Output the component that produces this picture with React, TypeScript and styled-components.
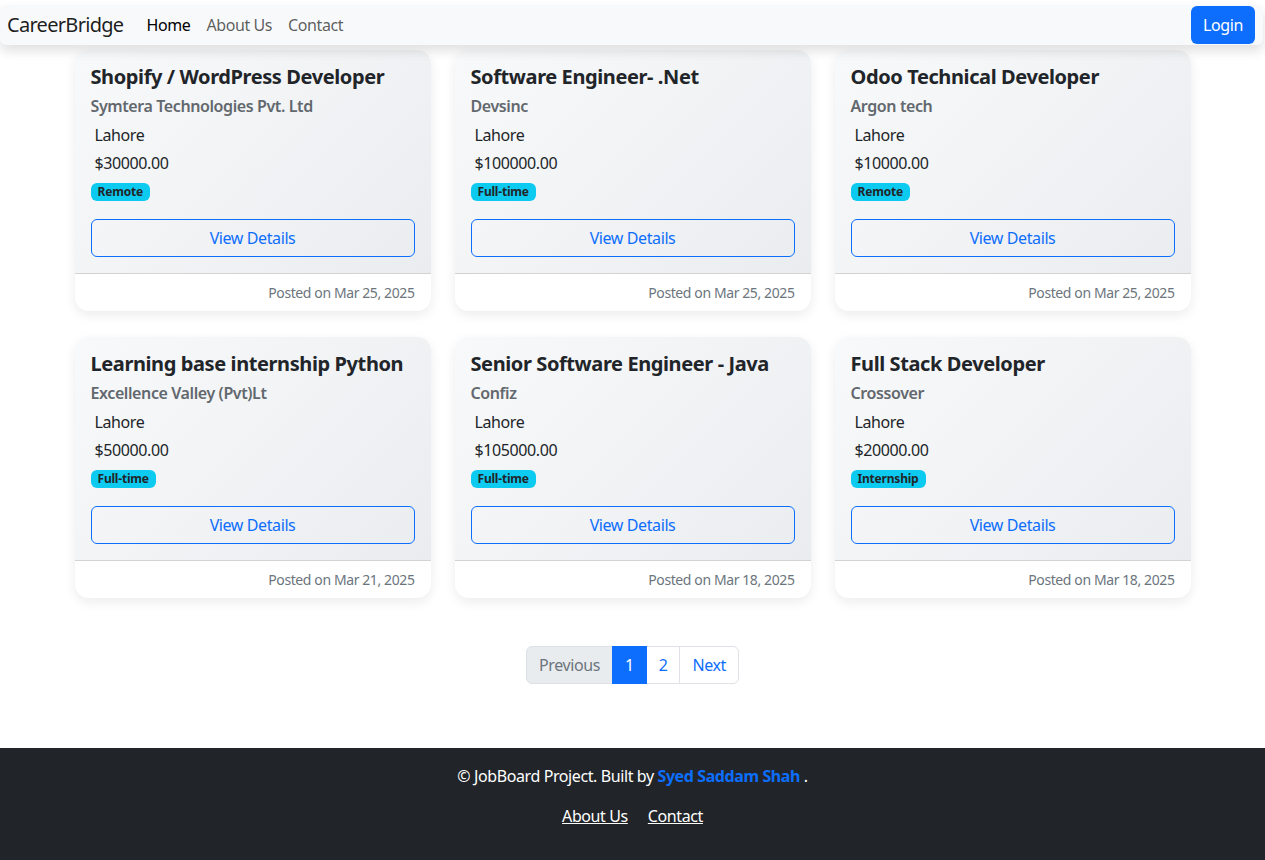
import React from "react";
import styled, { createGlobalStyle } from "styled-components";

const Global = createGlobalStyle`
  * { box-sizing: border-box; }
  body {
    margin: 0;
    font-family: "Noto Sans", "Open Sans", sans-serif;
    font-size: 16px;
    line-height: 1.5;
    letter-spacing: -0.4px;
    color: #212529;
    background: #fff;
  }
`;

const Page = styled.div`
  display: flex;
  flex-direction: column;
  min-height: 860px;
`;

const Navbar = styled.nav`
  position: sticky;
  top: 5px;
  z-index: 10;
  margin: 5px 2px 0 0;
  height: 40px;
  display: flex;
  align-items: center;
  padding: 0 8px 0 7px;
  background: #f8f9fa;
  border-radius: 6px;
  box-shadow: 0 6px 12px rgba(0, 0, 0, 0.12);
`;

const Brand = styled.a`
  font-size: 20px;
  letter-spacing: -0.7px;
  color: rgba(0, 0, 0, 0.9);
  text-decoration: none;
  margin-right: 23px;
`;

const NavLinks = styled.div`
  display: flex;
  gap: 16px;
  flex: 1;
`;

const NavLink = styled.a<{ $active?: boolean }>`
  font-size: 16px;
  color: ${(p) => (p.$active ? "#000" : "rgba(0,0,0,0.65)")};
  text-decoration: none;
`;

const LoginButton = styled.button`
  font-family: inherit;
  font-size: 16px;
  letter-spacing: inherit;
  color: #fff;
  background: #0d6efd;
  border: none;
  border-radius: 6px;
  height: 38px;
  padding: 0 12px;
`;

const Container = styled.main`
  width: 1140px;
  margin: 5px auto 0;
  padding: 0 12px;
`;

const Grid = styled.div`
  display: grid;
  grid-template-columns: repeat(3, 1fr);
  column-gap: 24px;
  row-gap: 26px;
`;

const Card = styled.div`
  display: flex;
  flex-direction: column;
  border-radius: 14px;
  overflow: hidden;
  background: linear-gradient(135deg, #f8f9fa, #e9ecef);
  box-shadow: 0 4px 12px rgba(0, 0, 0, 0.08);
`;

const CardBody = styled.div`
  flex: 1;
  padding: 16px;
  display: flex;
  flex-direction: column;
`;

const Title = styled.h5`
  margin: 0 0 7px;
  font-size: 20px;
  font-weight: 700;
  line-height: 1.2;
  color: #212529;
  position: relative;
  top: -1px;
`;

const Company = styled.h6`
  margin: 0 0 7px;
  font-size: 16px;
  font-weight: 600;
  line-height: 1.2;
  color: #62686e;
`;

const Info = styled.p`
  margin: 0 0 4px;
  padding-left: 4px;
  font-size: 16px;
  line-height: 24px;
`;

const Badge = styled.span`
  align-self: flex-start;
  margin-top: 4px;
  background: #0dcaf0;
  color: #212529;
  font-size: 12px;
  font-weight: 700;
  letter-spacing: -0.2px;
  line-height: 1;
  padding: 3px 7px;
  border-radius: 6px;
`;

const OutlineButton = styled.button`
  margin-top: 18px;
  height: 38px;
  width: 100%;
  font-family: inherit;
  letter-spacing: inherit;
  font-size: 16px;
  color: #0d6efd;
  background: transparent;
  border: 1px solid #0d6efd;
  border-radius: 6px;
`;

const CardFooter = styled.div`
  background: #fff;
  border-top: 1px solid #d3d3d3;
  padding: 8px 16px;
  text-align: right;
  font-size: 14px;
  line-height: 21px;
  color: #6c757d;
`;

const Pagination = styled.ul`
  display: flex;
  justify-content: center;
  list-style: none;
  padding: 0;
  margin: 48px 0 64px;
`;

const PageItem = styled.li<{ $active?: boolean; $disabled?: boolean; $first?: boolean; $last?: boolean }>`
  height: 38px;
  padding: 0 12px;
  display: flex;
  align-items: center;
  font-size: 16px;
  border: 1px solid ${(p) => (p.$active ? "#0d6efd" : "#dee2e6")};
  margin-left: ${(p) => (p.$first ? "0" : "-1px")};
  background: ${(p) => (p.$active ? "#0d6efd" : p.$disabled ? "#e9ecef" : "#fff")};
  color: ${(p) => (p.$active ? "#fff" : p.$disabled ? "#6c757d" : "#0d6efd")};
  border-radius: ${(p) => (p.$first ? "6px 0 0 6px" : p.$last ? "0 6px 6px 0" : "0")};
  position: relative;
  z-index: ${(p) => (p.$active ? 1 : 0)};
`;

const Footer = styled.footer`
  margin-top: auto;
  background: #212529;
  color: #fff;
  text-align: center;
  padding: 16px 0 32px;
`;

const FooterText = styled.p`
  margin: 0 0 16px;
  font-size: 16px;
  line-height: 24px;
`;

const Author = styled.a`
  color: #0d6efd;
  font-weight: 700;
  text-decoration: none;
`;

const FooterLinks = styled.div`
  display: flex;
  justify-content: center;
  gap: 20px;
  font-size: 16px;
  line-height: 24px;
`;

const FooterLink = styled.a`
  color: #fff;
  text-decoration: underline;
`;

const jobs = [
  { title: "Shopify / WordPress Developer", company: "Symtera Technologies Pvt. Ltd", salary: "$30000.00", type: "Remote", date: "Mar 25, 2025" },
  { title: "Software Engineer- .Net", company: "Devsinc", salary: "$100000.00", type: "Full-time", date: "Mar 25, 2025" },
  { title: "Odoo Technical Developer", company: "Argon tech", salary: "$10000.00", type: "Remote", date: "Mar 25, 2025" },
  { title: "Learning base internship Python", company: "Excellence Valley (Pvt)Lt", salary: "$50000.00", type: "Full-time", date: "Mar 21, 2025" },
  { title: "Senior Software Engineer - Java", company: "Confiz", salary: "$105000.00", type: "Full-time", date: "Mar 18, 2025" },
  { title: "Full Stack Developer", company: "Crossover", salary: "$20000.00", type: "Internship", date: "Mar 18, 2025" },
];

export default function App() {
  return (
    <Page>
      <Global />
      <Navbar>
        <Brand>CareerBridge</Brand>
        <NavLinks>
          <NavLink $active>Home</NavLink>
          <NavLink>About Us</NavLink>
          <NavLink>Contact</NavLink>
        </NavLinks>
        <LoginButton>Login</LoginButton>
      </Navbar>
      <Container>
        <Grid>
          {jobs.map((j) => (
            <Card key={j.title}>
              <CardBody>
                <Title>{j.title}</Title>
                <Company>{j.company}</Company>
                <Info>Lahore</Info>
                <Info>{j.salary}</Info>
                <Badge>{j.type}</Badge>
                <OutlineButton>View Details</OutlineButton>
              </CardBody>
              <CardFooter>Posted on {j.date}</CardFooter>
            </Card>
          ))}
        </Grid>
        <Pagination>
          <PageItem $disabled $first>Previous</PageItem>
          <PageItem $active>1</PageItem>
          <PageItem>2</PageItem>
          <PageItem $last>Next</PageItem>
        </Pagination>
      </Container>
      <Footer>
        <FooterText>
          © JobBoard Project. Built by <Author>Syed Saddam Shah</Author> .
        </FooterText>
        <FooterLinks>
          <FooterLink>About Us</FooterLink>
          <FooterLink>Contact</FooterLink>
        </FooterLinks>
      </Footer>
    </Page>
  );
}
